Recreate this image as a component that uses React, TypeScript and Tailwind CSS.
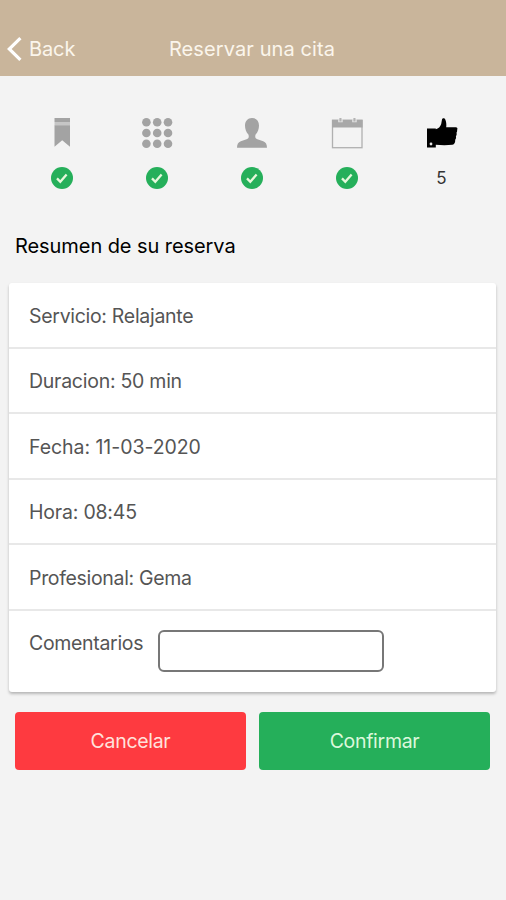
import type { ReactNode } from "react";

function BookmarkIcon() {
  return (
    <svg width="32" height="32" viewBox="0 0 32 32" fill="#a3a3a3">
      <path d="M8.5 1H24V5H8.5Z" />
      <path d="M8.5 5H24V8.3H8.5Z" fill="#c6c6c6" />
      <path d="M8.5 8.3H24V29.8L16.2 23.3L8.5 29.8Z" />
    </svg>
  );
}

function GridIcon() {
  return (
    <svg width="32" height="32" viewBox="0 0 32 32" fill="#a3a3a3">
      {[5.2, 16, 26.8].map((cy) =>
        [5.4, 16.2, 27].map((cx) => <circle key={`${cx}-${cy}`} cx={cx} cy={cy} r="4.3" />),
      )}
    </svg>
  );
}

function PersonIcon() {
  return (
    <svg width="32" height="32" viewBox="0 0 32 32" fill="#a3a3a3">
      <path d="M16 0.9C11.7 0.9 9 4 9 8.6C9 12.2 10.2 15.4 12.4 17.6C13.2 20 12.7 21.5 10.6 22.3L4.8 24.2C2.2 25.2 1 27.2 1 30.7H31C31 27.2 29.8 25.2 27.2 24.2L21.4 22.3C19.3 21.5 18.8 20 19.6 17.6C21.8 15.4 23 12.2 23 8.6C23 4 20.3 0.9 16 0.9Z" />
    </svg>
  );
}

function CalendarIcon() {
  return (
    <svg width="32" height="32" viewBox="0 0 32 32">
      <rect x="1.5" y="3.3" width="29.5" height="27.4" fill="#f3f3f3" stroke="#b0b0b0" strokeWidth="1.3" />
      <path d="M1 2.8H31.6V10.5H1Z" fill="#a8a8a8" />
      <path d="M7.2 2H11.7V5.3H7.2ZM21.2 2H25.7V5.3H21.2Z" fill="#e4e4e4" />
      <path d="M8.4 1H10.5V4.5H8.4ZM22.4 1H24.5V4.5H22.4Z" fill="#b3b3b3" />
    </svg>
  );
}

function ThumbIcon() {
  return (
    <svg width="32" height="32" viewBox="0 0 32 32">
      <path
        fill="#000"
        d="M1 11.4H9.8V12.2C12.4 11.8 14.4 9.6 15.2 7L16 2.4C16.4 0.8 18.6 0.7 19.3 2.4C20.4 5 20.5 7.6 20.2 10.3H29.8C31.3 10.3 31.8 11.4 31.2 12.8C31.3 14 31 15 30.5 15.8C30.9 17.2 30.6 18.4 29.9 19.3C30.3 20.8 30 22 29.2 22.8C29.4 25.4 28.6 27.4 26.4 27.8C21 28.5 15 28.4 9.8 27.8V30.6H1Z"
      />
      <circle cx="5" cy="27" r="1.4" fill="#e5e5e5" />
    </svg>
  );
}

function DoneBadge() {
  return (
    <svg width="22" height="22" viewBox="0 0 22 22">
      <circle cx="11" cy="11" r="11" fill="#25af5a" />
      <path d="M6 11.4L9.3 14.8L15.6 7.4" fill="none" stroke="#e6f8dc" strokeWidth="2.3" />
    </svg>
  );
}

function Step({ icon, children }: { icon: ReactNode; children: ReactNode }) {
  return (
    <li className="flex flex-col items-center">
      {icon}
      <div className="mt-[17px] flex h-6 items-center justify-center text-[17px] text-[#333]">{children}</div>
    </li>
  );
}

const details = [
  { text: "Servicio: Relajante", tracking: "tracking-[-0.3px]" },
  { text: "Duracion: 50 min", tracking: "tracking-[-0.26px]" },
  { text: "Fecha: 11-03-2020", tracking: "tracking-[-0.05px]" },
  { text: "Hora: 08:45", tracking: "tracking-[-0.2px]" },
  { text: "Profesional: Gema", tracking: "tracking-[-0.32px]" },
];

export default function App() {
  return (
    <div className="h-[900px] w-[506px] overflow-hidden bg-[#f3f3f3] font-['Inter','Liberation_Sans',sans-serif] text-[20px] leading-6">
      <header className="grid h-[76px] grid-cols-[1fr_auto_1fr] items-end bg-[#c9b59b] pb-[15px] text-[#fbf5ec]">
        <button className="flex items-center pl-[7px]">
          <svg width="15" height="24" viewBox="0 0 15 24" fill="none" stroke="#fff" strokeWidth="3.2">
            <path d="M13.4 1.2L2.3 12L13.4 22.8" />
          </svg>
          <span className="ml-[7px] tracking-[-0.1px]">Back</span>
        </button>
        <h1 className="pr-[2px] tracking-[0.1px]">Reservar una cita</h1>
      </header>

      <main>
        <ol className="grid grid-cols-5 pt-[41px] pr-[17px] pl-[14px]">
          <Step icon={<BookmarkIcon />}><DoneBadge /></Step>
          <Step icon={<GridIcon />}><DoneBadge /></Step>
          <Step icon={<PersonIcon />}><DoneBadge /></Step>
          <Step icon={<CalendarIcon />}><DoneBadge /></Step>
          <Step icon={<ThumbIcon />}>5</Step>
        </ol>

        <h2 className="mt-[44px] pl-[15px] tracking-[-0.07px] text-black">Resumen de su reserva</h2>

        <section className="mt-[25px] mr-[10px] ml-[9px] h-[409px] rounded-[3px] bg-white text-[19.5px] text-[#555] shadow-[0_2px_3px_rgba(0,0,0,0.25)]">
          {details.map((row) => (
            <p key={row.text} className={`flex h-[65.5px] items-center border-b-2 border-[#e8e8e8] pt-[2px] pl-5 ${row.tracking}`}>
              {row.text}
            </p>
          ))}
          <label className="flex items-start pt-[19px] pl-5">
            <span className="mt-px w-[129px] tracking-[-0.32px]">Comentarios</span>
            <input className="h-[42px] w-[226px] rounded-[6px] border-2 border-[#777] bg-white px-2 outline-none" />
          </label>
        </section>

        <div className="mt-5 mr-4 ml-[15px] grid h-[58px] grid-cols-2 gap-[13px] text-[19.5px] tracking-[-0.3px]">
          <button className="rounded-[4px] bg-[#fe3a40] text-[#ffe2dc]">Cancelar</button>
          <button className="rounded-[4px] bg-[#25af5a] text-[#dcf8dc]">Confirmar</button>
        </div>
      </main>
    </div>
  );
}
